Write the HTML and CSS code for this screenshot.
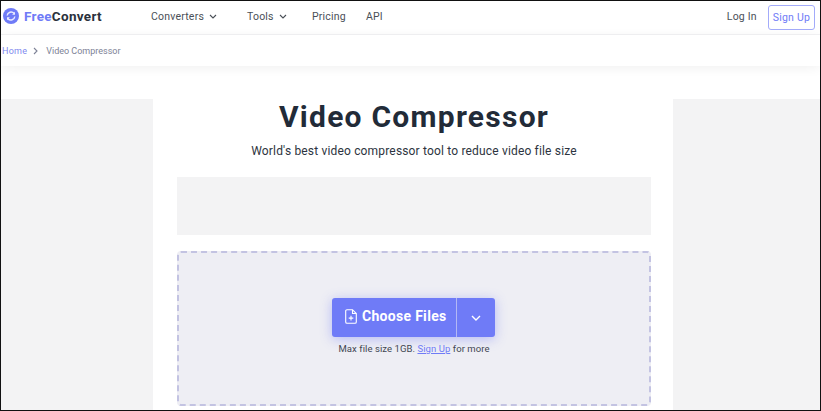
FILE: index.html
```html
<!DOCTYPE html>
<html lang="en">
<head>
    <meta charset="UTF-8">
    <meta name="viewport" content="width=device-width, initial-scale=1.0">
    <title>Video Compressor</title>
    <link rel="stylesheet" href="styles.css">
</head>
<body>
    <div class="frame">
        <header class="topbar">
            <div class="logo">
                <svg class="logo-icon" viewBox="0 0 20 20" width="20" height="20">
                    <circle cx="10" cy="10" r="10" fill="#6f7bf7"/>
                    <path d="M5.2 9.4A5 5 0 0 1 13.8 6.6" fill="none" stroke="#fff" stroke-opacity="0.85" stroke-width="1.8"/>
                    <path d="M14.8 10.6A5 5 0 0 1 6.2 13.4" fill="none" stroke="#fff" stroke-opacity="0.85" stroke-width="1.8"/>
                    <path d="M15 4.6V8.4H11.4Z M5 15.4V11.6H8.6Z" fill="#fff" fill-opacity="0.85"/>
                </svg>
                <span class="logo-text"><span class="logo-free">Free</span>Convert</span>
            </div>
            <nav class="nav">
                <a class="nav-link nav-converters">Converters
                    <svg class="caret" viewBox="0 0 8 5" width="8" height="5"><path d="M1 1l3 3 3-3" fill="none" stroke="#4a4f57" stroke-width="1.1"/></svg>
                </a>
                <a class="nav-link nav-tools">Tools
                    <svg class="caret" viewBox="0 0 8 5" width="8" height="5"><path d="M1 1l3 3 3-3" fill="none" stroke="#4a4f57" stroke-width="1.1"/></svg>
                </a>
                <a class="nav-link nav-pricing">Pricing</a>
                <a class="nav-link">API</a>
            </nav>
            <div class="account">
                <a class="login">Log In</a>
                <a class="signup">Sign Up</a>
            </div>
        </header>

        <div class="breadcrumb">
            <a class="crumb-home">Home</a>
            <svg class="crumb-sep" viewBox="0 0 5 8" width="5" height="8"><path d="M1 1l3 3-3 3" fill="none" stroke="#7d8296" stroke-width="1.1"/></svg>
            <span class="crumb-current">Video Compressor</span>
        </div>

        <div class="page">
            <aside class="side side-left"></aside>
            <main class="content">
                <h1>Video Compressor</h1>
                <p class="subtitle">World's best video compressor tool to reduce video file size</p>
                <div class="ad-slot"></div>
                <section class="dropzone">
                    <div class="choose-btn">
                        <div class="choose-main">
                            <svg class="file-icon" viewBox="0 0 12 15" width="12" height="15">
                                <path d="M2 .7H7.5L11.3 4.5V13a1.3 1.3 0 0 1-1.3 1.3H2A1.3 1.3 0 0 1 .7 13V2A1.3 1.3 0 0 1 2 .7Z M7.5.7V4.5H11.3" fill="none" stroke="#fff" stroke-width="1.1"/>
                                <path d="M6 6.8V11.4M3.7 9.1H8.3" fill="none" stroke="#fff" stroke-width="1.1"/>
                            </svg>
                            <span>Choose Files</span>
                        </div>
                        <div class="choose-more">
                            <svg viewBox="0 0 10 6" width="10" height="6"><path d="M1 1l4 4 4-4" fill="none" stroke="#fff" stroke-width="1.4"/></svg>
                        </div>
                    </div>
                    <p class="limit">Max file size 1GB. <a class="limit-link">Sign Up</a> for more</p>
                </section>
            </main>
            <aside class="side side-right"></aside>
        </div>
    </div>
</body>
</html>
```

FILE: styles.css
```css
* {
    box-sizing: border-box;
}
html, body {
    margin: 0;
    padding: 0;
}
body {
    font-family: Roboto, "Noto Sans", sans-serif;
    background-color: #fff;
    color: #222b38;
}
.frame {
    width: 821px;
    height: 411px;
    border: 1px solid #111;
    overflow: hidden;
    display: flex;
    flex-direction: column;
}
.topbar {
    height: 34px;
    flex: none;
    display: flex;
    align-items: center;
    padding: 0 5px 3px 2px;
    border-bottom: 1px solid #f3f3f5;
}
.logo {
    display: flex;
    align-items: center;
    width: 148px;
    gap: 5px;
}
.logo-icon {
    width: 16px;
    height: 16px;
}
.logo-text {
    font-size: 13.5px;
    font-weight: 700;
    letter-spacing: 0.3px;
    color: #2a313c;
}
.logo-free {
    color: #6f7bf7;
}
.nav {
    display: flex;
    align-items: center;
    flex: 1;
}
.nav-link {
    font-size: 10.5px;
    letter-spacing: 0.2px;
    color: #4a4f57;
    display: flex;
    align-items: center;
    gap: 5px;
}
.nav-converters {
    width: 96px;
}
.nav-tools {
    width: 65px;
}
.nav-pricing {
    width: 54px;
}
.account {
    display: flex;
    align-items: center;
    gap: 11px;
}
.login {
    font-size: 10.5px;
    letter-spacing: 0.2px;
    color: #4a4f57;
}
.signup {
    font-size: 10.5px;
    letter-spacing: 0.2px;
    color: #6f7bf7;
    border: 1px solid #a3abfa;
    border-radius: 3px;
    padding: 5px 4px;
    line-height: 13px;
    margin-top: 3px;
}
.breadcrumb {
    height: 31px;
    flex: none;
    display: flex;
    align-items: center;
    gap: 6px;
    padding-left: 1px;
    font-size: 9px;
    box-shadow: 0 2px 12px rgba(0,0,0,0.06);
    position: relative;
}
.crumb-home {
    color: #8088ee;
    letter-spacing: 0.25px;
}
.crumb-sep {
    margin-right: 2px;
}
.crumb-current {
    color: #7d8296;
}
.page {
    flex: 1;
    display: flex;
    margin-top: 33px;
    min-height: 0;
}
.side {
    background-color: #f3f3f4;
}
.side-left {
    width: 152px;
}
.side-right {
    flex: 1;
}
.content {
    width: 520px;
    padding: 0 22px 0 24px;
    text-align: center;
}
h1 {
    margin: 0;
    font-size: 30px;
    line-height: 36px;
    font-weight: 700;
    letter-spacing: 1.25px;
    color: #222b38;
}
.subtitle {
    margin: 8px 0 0 0;
    font-size: 12px;
    line-height: 16px;
    letter-spacing: 0.17px;
    color: #2d3440;
}
.ad-slot {
    height: 58px;
    margin-top: 18px;
    background-color: #f3f3f4;
}
.dropzone {
    height: 155px;
    margin-top: 16px;
    border: 2px dashed #c3c3e2;
    border-radius: 4px;
    background-color: #eeeef4;
    display: flex;
    flex-direction: column;
    align-items: center;
    padding-top: 45px;
}
.choose-btn {
    display: flex;
    height: 39px;
    margin-right: 1px;
    background-color: #6f7bf7;
    border-radius: 3px;
    color: #fff;
    box-shadow: 0 2px 12px rgba(111,123,247,0.45);
}
.choose-main {
    width: 125px;
    display: flex;
    align-items: center;
    gap: 5px;
    padding: 0 0 3px 13px;
    border-right: 1px solid #b3b8f5;
    font-size: 14px;
    font-weight: 700;
    letter-spacing: 0.3px;
}
.choose-more {
    width: 38px;
    display: flex;
    align-items: center;
    justify-content: center;
}
.limit {
    margin: 6px 0 0 0;
    font-size: 9.5px;
    line-height: 12px;
    letter-spacing: 0.07px;
    color: #3f4652;
}
.limit-link {
    color: #6f7bf7;
    text-decoration: underline;
}
```
